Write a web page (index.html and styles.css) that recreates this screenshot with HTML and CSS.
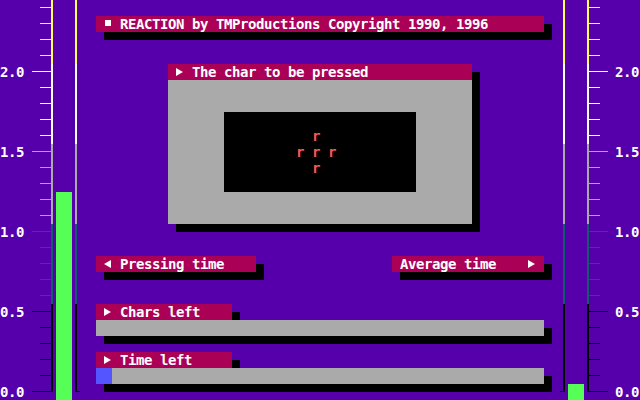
FILE: index.html
```html
<!DOCTYPE html>
<html lang="en">
<head>
<meta charset="utf-8">
<title>REACTION</title>
<link rel="stylesheet" href="styles.css">
</head>
<body>
<div class="screen">
  <svg class="gauge" viewBox="0 0 80 400" shape-rendering="crispEdges">
    <rect class="y" x="51" y="0" width="2" height="64"/>
    <rect class="w" x="51" y="64" width="2" height="80"/>
    <rect class="g" x="51" y="144" width="2" height="80"/>
    <rect class="t" x="51" y="224" width="2" height="80"/>
    <rect class="k" x="51" y="304" width="2" height="88"/>
    <rect class="y" x="75" y="0" width="2" height="64"/>
    <rect class="w" x="75" y="64" width="2" height="80"/>
    <rect class="g" x="75" y="144" width="2" height="80"/>
    <rect class="t" x="75" y="224" width="2" height="80"/>
    <rect class="k" x="75" y="304" width="2" height="88"/>
    <rect class="k" x="77" y="391" width="3" height="1"/>
    <rect class="y" x="40" y="7" width="11" height="1"/>
    <rect class="y" x="40" y="23" width="11" height="1"/>
    <rect class="y" x="40" y="39" width="11" height="1"/>
    <rect class="y" x="40" y="55" width="11" height="1"/>
    <rect class="w" x="32" y="71" width="19" height="1"/>
    <rect class="w" x="40" y="87" width="11" height="1"/>
    <rect class="w" x="40" y="103" width="11" height="1"/>
    <rect class="w" x="40" y="119" width="11" height="1"/>
    <rect class="w" x="40" y="135" width="11" height="1"/>
    <rect class="g" x="32" y="151" width="19" height="1"/>
    <rect class="g" x="40" y="167" width="11" height="1"/>
    <rect class="g" x="40" y="183" width="11" height="1"/>
    <rect class="g" x="40" y="199" width="11" height="1"/>
    <rect class="g" x="40" y="215" width="11" height="1"/>
    <rect class="t" x="32" y="231" width="19" height="1"/>
    <rect class="t" x="40" y="247" width="11" height="1"/>
    <rect class="t" x="40" y="263" width="11" height="1"/>
    <rect class="t" x="40" y="279" width="11" height="1"/>
    <rect class="t" x="40" y="295" width="11" height="1"/>
    <rect class="k" x="32" y="311" width="19" height="1"/>
    <rect class="k" x="40" y="327" width="11" height="1"/>
    <rect class="k" x="40" y="343" width="11" height="1"/>
    <rect class="k" x="40" y="359" width="11" height="1"/>
    <rect class="k" x="40" y="375" width="11" height="1"/>
    <rect class="k" x="32" y="391" width="19" height="1"/>
    <rect class="gr" x="56" y="192" width="16" height="208"/>
    <text class="lbl" x="0" y="77">2.0</text>
    <text class="lbl" x="0" y="157">1.5</text>
    <text class="lbl" x="0" y="237">1.0</text>
    <text class="lbl" x="0" y="317">0.5</text>
    <text class="lbl" x="0" y="397">0.0</text>
  </svg>

  <main class="center">
    <div class="bar title"><svg class="ic" viewBox="0 0 8 16"><rect x="1" y="4" width="6" height="6"/></svg><span> REACTION by TMProductions Copyright 1990, 1996</span></div>

    <section class="panel">
      <div class="bar head"><svg class="ic" viewBox="0 0 8 16"><polygon points="0,4 7,8 0,12"/></svg><span> The char to be pressed</span></div>
      <div class="panel-body">
        <div class="target">  r
r r r
  r</div>
      </div>
    </section>

    <div class="times">
      <div class="bar press"><svg class="ic" viewBox="0 0 8 16"><polygon points="7,4 0,8 7,12"/></svg><span> Pressing time</span></div>
      <div class="bar avg"><span>Average time</span><svg class="ic" viewBox="0 0 8 16"><polygon points="0,4 7,8 0,12"/></svg></div>
    </div>

    <div class="meter">
      <div class="bar label"><svg class="ic" viewBox="0 0 8 16"><polygon points="0,4 7,8 0,12"/></svg><span> Chars left</span></div>
      <div class="track"></div>
    </div>

    <div class="meter">
      <div class="bar label"><svg class="ic" viewBox="0 0 8 16"><polygon points="0,4 7,8 0,12"/></svg><span> Time left</span></div>
      <div class="track"><div class="fill" style="width:16px"></div></div>
    </div>
  </main>

  <svg class="gauge" viewBox="0 0 80 400" shape-rendering="crispEdges">
    <rect class="y" x="3" y="0" width="2" height="64"/>
    <rect class="w" x="3" y="64" width="2" height="80"/>
    <rect class="g" x="3" y="144" width="2" height="80"/>
    <rect class="t" x="3" y="224" width="2" height="80"/>
    <rect class="k" x="3" y="304" width="2" height="88"/>
    <rect class="k" x="0" y="391" width="3" height="1"/>
    <rect class="y" x="27" y="0" width="2" height="64"/>
    <rect class="w" x="27" y="64" width="2" height="80"/>
    <rect class="g" x="27" y="144" width="2" height="80"/>
    <rect class="t" x="27" y="224" width="2" height="80"/>
    <rect class="k" x="27" y="304" width="2" height="88"/>
    <rect class="y" x="29" y="7" width="11" height="1"/>
    <rect class="y" x="29" y="23" width="11" height="1"/>
    <rect class="y" x="29" y="39" width="11" height="1"/>
    <rect class="y" x="29" y="55" width="11" height="1"/>
    <rect class="w" x="29" y="71" width="19" height="1"/>
    <rect class="w" x="29" y="87" width="11" height="1"/>
    <rect class="w" x="29" y="103" width="11" height="1"/>
    <rect class="w" x="29" y="119" width="11" height="1"/>
    <rect class="w" x="29" y="135" width="11" height="1"/>
    <rect class="g" x="29" y="151" width="19" height="1"/>
    <rect class="g" x="29" y="167" width="11" height="1"/>
    <rect class="g" x="29" y="183" width="11" height="1"/>
    <rect class="g" x="29" y="199" width="11" height="1"/>
    <rect class="g" x="29" y="215" width="11" height="1"/>
    <rect class="t" x="29" y="231" width="19" height="1"/>
    <rect class="t" x="29" y="247" width="11" height="1"/>
    <rect class="t" x="29" y="263" width="11" height="1"/>
    <rect class="t" x="29" y="279" width="11" height="1"/>
    <rect class="t" x="29" y="295" width="11" height="1"/>
    <rect class="k" x="29" y="311" width="19" height="1"/>
    <rect class="k" x="29" y="327" width="11" height="1"/>
    <rect class="k" x="29" y="343" width="11" height="1"/>
    <rect class="k" x="29" y="359" width="11" height="1"/>
    <rect class="k" x="29" y="375" width="11" height="1"/>
    <rect class="k" x="29" y="391" width="19" height="1"/>
    <rect class="gr" x="8" y="384" width="16" height="16"/>
    <text class="lbl" x="55" y="77">2.0</text>
    <text class="lbl" x="55" y="157">1.5</text>
    <text class="lbl" x="55" y="237">1.0</text>
    <text class="lbl" x="55" y="317">0.5</text>
    <text class="lbl" x="55" y="397">0.0</text>
  </svg>
</div>
</body>
</html>
```

FILE: styles.css
```css
* { box-sizing: border-box; margin: 0; padding: 0; }
html, body { width: 640px; height: 400px; overflow: hidden; }
body {
  background: #5500aa;
  color: #ffffff;
  font: bold 14px/16px "DejaVu Sans Mono", monospace;
  letter-spacing: -0.43px;
}
.screen {
  display: grid;
  grid-template-columns: 80px 480px 80px;
  height: 400px;
}
.gauge { display: block; width: 80px; height: 400px; }
.gauge .y { fill: #ffff55; }
.gauge .w { fill: #ffffff; }
.gauge .g { fill: #aaaaaa; }
.gauge .t { fill: #105a6a; }
.gauge .k { fill: #000000; }
.gauge .gr { fill: #55ff55; }
.gauge .lbl {
  fill: #ffffff;
  font: bold 14px "DejaVu Sans Mono", monospace;
  letter-spacing: -0.43px;
}

.center {
  display: flex;
  flex-direction: column;
  padding: 16px 16px 0;
}
.bar {
  display: flex;
  align-items: flex-start;
  height: 16px;
  padding-left: 8px;
  background: #aa0055;
  white-space: pre;
  box-shadow: 8px 8px 0 #000000;
}
.ic { display: block; flex: none; width: 8px; height: 16px; fill: #ffffff; }

.title { margin-bottom: 32px; }

.panel {
  align-self: center;
  width: 304px;
  margin-bottom: 32px;
  box-shadow: 8px 8px 0 #000000;
}
.panel .head { box-shadow: none; }
.panel-body {
  display: flex;
  align-items: center;
  justify-content: center;
  height: 144px;
  background: #aaaaaa;
}
.target {
  width: 192px;
  height: 80px;
  padding: 16px 0 0 72px;
  background: #000000;
  color: #ff5555;
  white-space: pre;
}

.times {
  display: flex;
  justify-content: space-between;
  margin-bottom: 32px;
}
.press { width: 160px; }
.avg { width: 152px; justify-content: space-between; padding-right: 8px; }

.meter { margin-bottom: 16px; }
.meter .label { width: 136px; }
.track {
  display: flex;
  height: 16px;
  background: #aaaaaa;
  box-shadow: 8px 8px 0 #000000;
}
.fill { height: 16px; background: #5555ff; }
```
